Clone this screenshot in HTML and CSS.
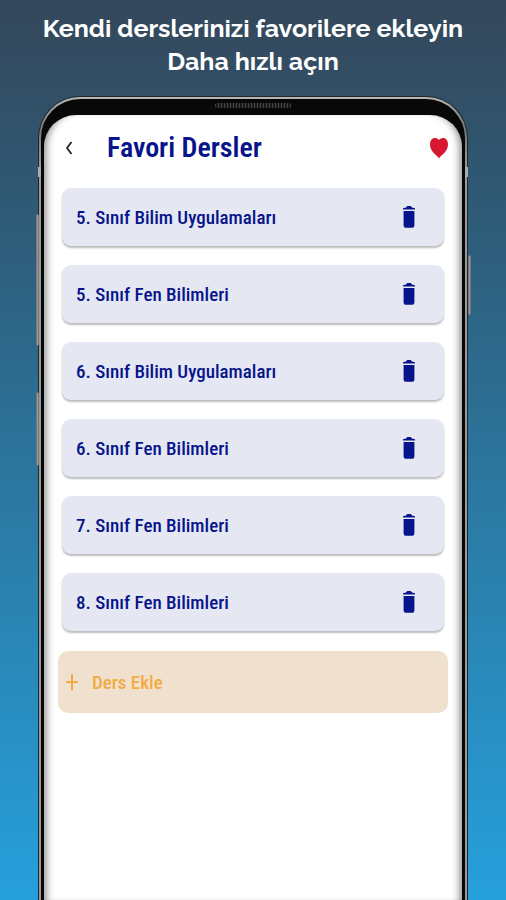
FILE: index.html
```html
<!DOCTYPE html>
<html lang="tr">
<head>
<meta charset="utf-8">
<meta name="viewport" content="width=device-width, initial-scale=1">
<title>Favori Dersler</title>
<link rel="stylesheet" href="styles.css">
</head>
<body>
<svg class="defs" width="0" height="0" aria-hidden="true">
  <symbol id="trash" viewBox="0 0 12 22">
    <path d="M0 3.600V2.200L3 1.400 4.200 0h3.600L9 1.400l3 .8v1.400zM.6 5h10.800v14.500q0 2.200-2 2.200H2.600q-2 0-2-2.200z"/>
  </symbol>
</svg>
<p class="headline">Kendi derslerinizi favorilere ekleyin<br>Daha hızlı açın</p>
<div class="phone">
  <span class="side volume"></span>
  <span class="side assist"></span>
  <span class="side power"></span>
  <span class="band band-left"></span>
  <span class="band band-right"></span>
  <div class="bezel">
    <span class="speaker"></span>
    <main class="screen">
      <header class="bar">
        <button class="icon-button back" aria-label="Geri">
          <svg width="8" height="14" viewBox="0 0 8 14"><path d="M6.500 1 2 7l4.500 6" fill="none" stroke="currentColor" stroke-width="1.800"/></svg>
        </button>
        <h1>Favori Dersler</h1>
        <button class="icon-button heart" aria-label="Favoriler">
          <svg width="18" height="22" viewBox="0 0 18 22"><path d="M9 21.500C7.600 18.500 0 15 0 7.500 0 3.500 2 1 4.800 1 6.700 1 8.200 1.700 9 3 9.800 1.700 11.300 1 13.200 1 16 1 18 3.500 18 7.500c0 7.500-7.600 11-9 14z" fill="currentColor"/></svg>
        </button>
      </header>
      <ul class="lessons">
        <li class="lesson"><span>5. Sınıf Bilim Uygulamaları</span><button class="icon-button" aria-label="Sil"><svg width="12" height="22"><use href="#trash"/></svg></button></li>
        <li class="lesson"><span>5. Sınıf Fen Bilimleri</span><button class="icon-button" aria-label="Sil"><svg width="12" height="22"><use href="#trash"/></svg></button></li>
        <li class="lesson"><span>6. Sınıf Bilim Uygulamaları</span><button class="icon-button" aria-label="Sil"><svg width="12" height="22"><use href="#trash"/></svg></button></li>
        <li class="lesson"><span>6. Sınıf Fen Bilimleri</span><button class="icon-button" aria-label="Sil"><svg width="12" height="22"><use href="#trash"/></svg></button></li>
        <li class="lesson"><span>7. Sınıf Fen Bilimleri</span><button class="icon-button" aria-label="Sil"><svg width="12" height="22"><use href="#trash"/></svg></button></li>
        <li class="lesson"><span>8. Sınıf Fen Bilimleri</span><button class="icon-button" aria-label="Sil"><svg width="12" height="22"><use href="#trash"/></svg></button></li>
      </ul>
      <button class="add">
        <svg width="12" height="16" viewBox="0 0 12 16"><path d="M6 0v16M0 8h12" fill="none" stroke="currentColor" stroke-width="2"/></svg>
        Ders Ekle
      </button>
    </main>
  </div>
</div>
</body>
</html>
```
FILE: styles.css
```css
* {
  box-sizing: border-box;
}

body {
  margin: 0;
  min-height: 100vh;
  display: flex;
  flex-direction: column;
  background: linear-gradient(#34475a, #2e5e7c 28%, #2b7ba5 58%, #26a0dc);
  font-family: "Roboto Condensed", Roboto, sans-serif;
}

.defs {
  position: absolute;
}

.headline {
  margin: 0;
  padding: 12px 8px 18px;
  color: #fff;
  font: 700 25px/33px Raleway, Lato, sans-serif;
  text-align: center;
}

.phone {
  position: relative;
  flex: 1;
  display: flex;
  margin: 0 38px;
  padding: 2px 2px 0;
  border: 1px solid #20282c;
  border-bottom: 0;
  border-radius: 42px 42px 0 0;
  background: linear-gradient(#b8b9b6, #777 30px, #999 70px);
}

.bezel {
  position: relative;
  flex: 1;
  display: flex;
  padding: 16px 3px 0;
  border-radius: 39px 39px 0 0;
  background: #080808;
}

.speaker {
  position: absolute;
  top: 4px;
  left: 50%;
  width: 76px;
  height: 5px;
  margin-left: -38px;
  border-radius: 3px;
  background: repeating-linear-gradient(90deg, #484848 0 1px, #181818 1px 3px);
}

.side {
  position: absolute;
  width: 3px;
  border: 1px solid #777;
  border-radius: 2px;
  background: #999;
}

.volume {
  top: 117px;
  left: -3px;
  height: 132px;
}

.assist {
  top: 295px;
  left: -3px;
  height: 74px;
}

.power {
  top: 158px;
  right: -4px;
  height: 60px;
}

.band {
  position: absolute;
  top: 70px;
  width: 3px;
  height: 10px;
  background: #a5adae;
}

.band-left {
  left: -1px;
}

.band-right {
  right: -1px;
}

.screen {
  flex: 1;
  min-width: 0;
  padding: 0 14px;
  border-radius: 32px 32px 0 0;
  background: #fff;
  box-shadow: inset 8px 0 7px -5px #0006, inset -8px 0 7px -5px #0006;
}

.bar {
  display: flex;
  align-items: center;
  height: 65px;
}

h1 {
  flex: 1;
  margin: 0 0 0 34px;
  color: #07148b;
  font-size: 28px;
  font-weight: 600;
  line-height: 36px;
}

.icon-button {
  display: flex;
  padding: 0;
  border: 0;
  background: none;
  color: #07148b;
  fill: currentColor;
}

.back {
  margin-left: 7px;
  color: #222;
}

.heart {
  color: #d81730;
}

.lessons {
  display: flex;
  flex-direction: column;
  gap: 19px;
  margin: 8px 4px 20px;
  padding: 0;
  list-style: none;
}

.lesson {
  display: flex;
  align-items: center;
  justify-content: space-between;
  min-height: 58px;
  padding: 0 29px 0 14px;
  border-radius: 9px;
  background: #e5e8f2;
  box-shadow: 0 2px 2px #0004;
  color: #07148b;
  font-size: 19px;
  font-weight: 500;
}

.add {
  display: flex;
  align-items: center;
  gap: 14px;
  width: 100%;
  min-height: 62px;
  padding: 0 8px;
  border: 0;
  border-radius: 10px;
  background: #f0e1ce;
  color: #f2ab43;
  font: 500 19px "Roboto Condensed", Roboto, sans-serif;
}
```
